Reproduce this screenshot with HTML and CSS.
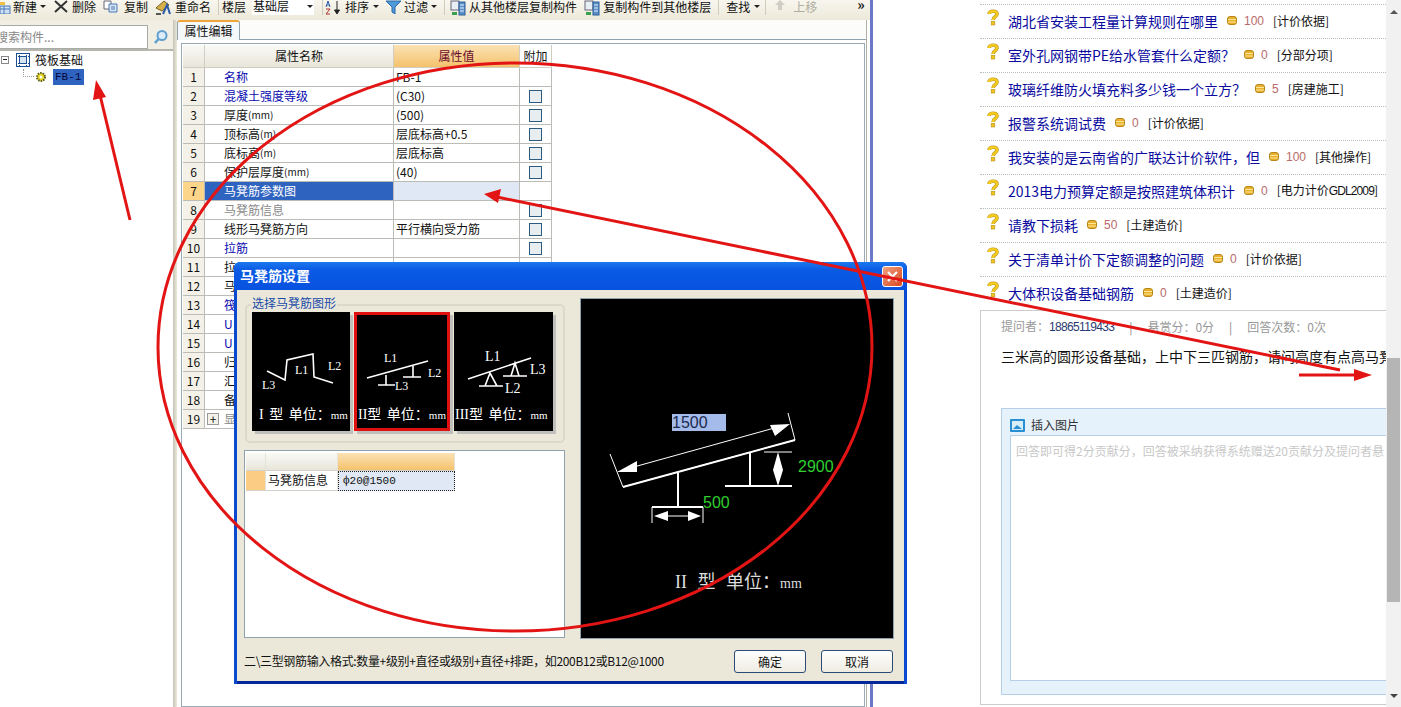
FILE: index.html
```html
<!DOCTYPE html>
<html lang="zh-CN">
<head>
<meta charset="utf-8">
<title>马凳筋设置</title>
<link rel="stylesheet" href="styles.css">
</head>
<body>
<svg class="defs" width="0" height="0" aria-hidden="true">
  <symbol id="q" viewBox="0 0 12 17">
    <path d="M2 5 C2 1.500 10 1 10 5 C10 8 6 7.500 6 11" fill="none" stroke="#b89018" stroke-width="3.600"/>
    <path d="M2 5 C2 1.500 10 1 10 5 C10 8 6 7.500 6 11" fill="none" stroke="#f4cc20" stroke-width="2.400"/>
    <rect x="4.200" y="12.400" width="3.600" height="3.600" fill="#f0c41c" stroke="#b89018" stroke-width="0.600"/>
  </symbol>
  <symbol id="coin" viewBox="0 0 10 9">
    <rect x="0.500" y="0.500" width="9" height="8" rx="2.500" fill="#e8b02c" stroke="#b8861a"/>
    <path d="M1 3.500H9M1 6H9" stroke="#fbe89a"/>
  </symbol>
  <symbol id="chk" viewBox="0 0 13 13">
    <rect x="0.500" y="0.500" width="12" height="12" fill="#e8edf0" stroke="#2c5a80"/>
  </symbol>
  <symbol id="cpy" viewBox="0 0 16 16">
    <rect x="1" y="1" width="8" height="9" fill="#e8eef6" stroke="#667"/>
    <rect x="9" y="2" width="6" height="13" fill="#5b8fc8" stroke="#2f5f98"/>
    <path d="M10 5H14M10 8H14M10 11H14" stroke="#e8f2ff"/>
    <path d="M2 12H7V15H2Z" fill="#3aa050"/>
  </symbol>
</svg>

<div class="screen">
  <section class="app">
    <div class="toolbar">
      <svg class="ti t-new" width="11" height="12" viewBox="0 0 11 12"><rect x="0" y="4" width="10" height="8" fill="#cfe0f5" stroke="#4a78b8"/><path d="M0 7H10M4 4V12" stroke="#4a78b8"/><rect x="0" y="0" width="5" height="3" fill="#f0c040"/></svg>
      <span class="tt w-new">新建</span><i class="caret c-new"></i>
      <svg class="ti t-del" width="14" height="13" viewBox="0 0 14 13"><path d="M1 1L13 12M13 1L1 12" stroke="#333" stroke-width="2"/></svg>
      <span class="tt w-del">删除</span>
      <svg class="ti t-cp" width="15" height="13" viewBox="0 0 15 13"><path d="M1 1H8V9H1Z" fill="#fff" stroke="#667"/><path d="M6 4H14V12H6Z" fill="#d5e3f3" stroke="#4a78b8"/><path d="M8 7H12M8 9H12" stroke="#4a78b8"/></svg>
      <span class="tt w-cp">复制</span>
      <svg class="ti t-ren" width="16" height="15" viewBox="0 0 16 15"><path d="M1 8L9 1L14 5L7 11Z" fill="#d8b048" stroke="#7a6020"/><path d="M8 14L12 5L15 14" fill="none" stroke="#2a5aa8" stroke-width="2"/><path d="M1 14H6" stroke="#555" stroke-width="2"/></svg>
      <span class="tt w-ren">重命名</span>
      <i class="sep s-a"></i>
      <span class="tt">楼层</span>
      <span class="floor">基础层<i class="caret"></i></span>
      <i class="sep s-b"></i>
      <svg class="ti t-sort" width="16" height="15" viewBox="0 0 16 15"><path d="M6 1V13M6 14L3.500 10H8.500Z" stroke="#222" fill="#222" transform="translate(6 0)"/><path d="M1 7L3 1L5 7M2 5H4" fill="none" stroke="#2a5aa8"/><path d="M1 9H5L1 14H5" fill="none" stroke="#b03030"/></svg>
      <span class="tt w-sort">排序</span><i class="caret c-sort"></i>
      <svg class="ti t-fil" width="15" height="14" viewBox="0 0 15 14"><path d="M0 1H15L9 7V14L6 12V7Z" fill="#4f9ad8" stroke="#2a6aa8"/></svg>
      <span class="tt w-fil">过滤</span><i class="caret c-fil"></i>
      <i class="sep s-c"></i>
      <svg class="ti t-c1" width="16" height="16"><use href="#cpy"/></svg>
      <span class="tt w-c1">从其他楼层复制构件</span>
      <svg class="ti t-c2" width="16" height="16"><use href="#cpy"/></svg>
      <span class="tt w-c2">复制构件到其他楼层</span>
      <i class="sep s-d"></i>
      <span class="tt">查找</span><i class="caret c-find"></i>
      <i class="sep s-e"></i>
      <svg class="ti t-up" width="10" height="11" viewBox="0 0 10 11"><path d="M5 0L10 5H7V10H3V5H0Z" fill="#d0cec2"/></svg>
      <span class="tt dim">上移</span>
      <span class="more">&raquo;</span>
    </div>

    <div class="workspace">
      <aside class="sidebar">
        <div class="search">
          <div class="search-input">搜索构件...</div>
          <div class="search-btn">
            <svg width="16" height="16" viewBox="0 0 16 16"><circle cx="9" cy="6.500" r="4.500" fill="#dcecf8" stroke="#5fa0d0" stroke-width="2"/><path d="M5.500 10L2 14" stroke="#5fa0d0" stroke-width="2.500"/></svg>
          </div>
        </div>
        <div class="tree">
          <div class="tree-root">
            <span class="minus"></span>
            <svg width="14" height="14" viewBox="0 0 14 14"><rect x="0.500" y="0.500" width="13" height="13" fill="#fff" stroke="#1c4f96"/><rect x="3.500" y="3.500" width="7" height="7" fill="#d8e6f4" stroke="#1c4f96"/><path d="M0 3.500H14M0 10.500H14M3.500 0V14M10.500 0V14" stroke="#1c4f96" stroke-dasharray="1 1"/></svg>
            <span>筏板基础</span>
          </div>
          <div class="tree-leaf">
            <i class="dots"></i>
            <svg width="12" height="12" viewBox="0 0 12 12"><circle cx="6" cy="6" r="4" fill="#e8d820" stroke="#5a5a20" stroke-dasharray="1.500 1" stroke-width="2"/><circle cx="6" cy="6" r="1.500" fill="#fff"/></svg>
            <span class="leaf-name">FB-1</span>
          </div>
        </div>
      </aside>
      <i class="splitter"></i>
      <main class="props">
        <div class="tabs"><span class="tab">属性编辑</span></div>
        <div class="grid-frame">
          <div class="grid">
            <div class="row head"><span class="num"></span><span class="name">属性名称</span><span class="val">属性值</span><span class="add">附加</span></div>
            <div class="row"><span class="num">1</span><span class="name blue">名称</span><span class="val">FB-1</span><span class="add"></span></div>
            <div class="row"><span class="num">2</span><span class="name blue">混凝土强度等级</span><span class="val">(C30)</span><span class="add"><svg width="13" height="13"><use href="#chk"/></svg></span></div>
            <div class="row"><span class="num">3</span><span class="name">厚度<small>(mm)</small></span><span class="val">(500)</span><span class="add"><svg width="13" height="13"><use href="#chk"/></svg></span></div>
            <div class="row"><span class="num">4</span><span class="name">顶标高<small>(m)</small></span><span class="val">层底标高+0.5</span><span class="add"><svg width="13" height="13"><use href="#chk"/></svg></span></div>
            <div class="row"><span class="num">5</span><span class="name">底标高<small>(m)</small></span><span class="val">层底标高</span><span class="add"><svg width="13" height="13"><use href="#chk"/></svg></span></div>
            <div class="row"><span class="num">6</span><span class="name">保护层厚度<small>(mm)</small></span><span class="val">(40)</span><span class="add"><svg width="13" height="13"><use href="#chk"/></svg></span></div>
            <div class="row sel"><span class="num">7</span><span class="name">马凳筋参数图</span><span class="val"></span><span class="add"></span></div>
            <div class="row"><span class="num">8</span><span class="name gray">马凳筋信息</span><span class="val"></span><span class="add"><svg width="13" height="13"><use href="#chk"/></svg></span></div>
            <div class="row"><span class="num">9</span><span class="name">线形马凳筋方向</span><span class="val">平行横向受力筋</span><span class="add"><svg width="13" height="13"><use href="#chk"/></svg></span></div>
            <div class="row"><span class="num">10</span><span class="name blue">拉筋</span><span class="val"></span><span class="add"><svg width="13" height="13"><use href="#chk"/></svg></span></div>
            <div class="row"><span class="num">11</span><span class="name">拉</span><span class="val"></span><span class="add"></span></div>
            <div class="row"><span class="num">12</span><span class="name">马</span><span class="val"></span><span class="add"></span></div>
            <div class="row"><span class="num">13</span><span class="name blue">筏</span><span class="val"></span><span class="add"></span></div>
            <div class="row"><span class="num">14</span><span class="name blue">U</span><span class="val"></span><span class="add"></span></div>
            <div class="row"><span class="num">15</span><span class="name blue">U</span><span class="val"></span><span class="add"></span></div>
            <div class="row"><span class="num">16</span><span class="name">归</span><span class="val"></span><span class="add"></span></div>
            <div class="row"><span class="num">17</span><span class="name">汇</span><span class="val"></span><span class="add"></span></div>
            <div class="row"><span class="num">18</span><span class="name">备</span><span class="val"></span><span class="add"></span></div>
            <div class="row"><span class="num">19</span><span class="name"><i class="plus">+</i><b class="plain">显</b></span><span class="val"></span><span class="add"></span></div>
          </div>
        </div>
      </main>
      <i class="edge"></i>
    </div>
  </section>

  <section class="web">
    <div class="web-main">
      <ul class="qlist">
        <li><svg class="qi"><use href="#q"/></svg><a>湖北省安装工程量计算规则在哪里</a><svg class="ci"><use href="#coin"/></svg><em>100</em><span>[计价依据]</span></li>
        <li><svg class="qi"><use href="#q"/></svg><a>室外孔网钢带PE给水管套什么定额？</a><svg class="ci"><use href="#coin"/></svg><em>0</em><span>[分部分项]</span></li>
        <li><svg class="qi"><use href="#q"/></svg><a>玻璃纤维防火填充料多少钱一个立方？</a><svg class="ci"><use href="#coin"/></svg><em>5</em><span>[房建施工]</span></li>
        <li><svg class="qi"><use href="#q"/></svg><a>报警系统调试费</a><svg class="ci"><use href="#coin"/></svg><em>0</em><span>[计价依据]</span></li>
        <li><svg class="qi"><use href="#q"/></svg><a>我安装的是云南省的广联达计价软件，但</a><svg class="ci"><use href="#coin"/></svg><em>100</em><span>[其他操作]</span></li>
        <li><svg class="qi"><use href="#q"/></svg><a>2013电力预算定额是按照建筑体积计</a><svg class="ci"><use href="#coin"/></svg><em>0</em><span>[电力计价<tt class="lat">GDL2009</tt>]</span></li>
        <li><svg class="qi"><use href="#q"/></svg><a>请教下损耗</a><svg class="ci"><use href="#coin"/></svg><em>50</em><span>[土建造价]</span></li>
        <li><svg class="qi"><use href="#q"/></svg><a>关于清单计价下定额调整的问题</a><svg class="ci"><use href="#coin"/></svg><em>0</em><span>[计价依据]</span></li>
        <li><svg class="qi"><use href="#q"/></svg><a>大体积设备基础钢筋</a><svg class="ci"><use href="#coin"/></svg><em>0</em><span>[土建造价]</span></li>
      </ul>
      <div class="detail">
        <div class="meta"><span>提问者：<b>18865119433</b></span><i>|</i><span>悬赏分：0分</span><i>|</i><span>回答次数：0次</span></div>
        <p class="question">三米高的圆形设备基础，上中下三匹钢筋，请问高度有点高马凳</p>
        <div class="editor">
          <div class="editor-head">
            <svg width="15" height="13" viewBox="0 0 15 13"><rect width="15" height="13" rx="1" fill="#2a8fd0"/><rect x="2" y="2" width="11" height="9" fill="#d8eefa"/><path d="M3 10L7 6L12 10Z" fill="#2a8fd0"/></svg>
            <span>插入图片</span>
          </div>
          <div class="editor-body">回答即可得2分贡献分，回答被采纳获得系统赠送20贡献分及提问者悬</div>
        </div>
      </div>
    </div>
    <div class="scrollbar">
      <span class="sb-up"></span>
      <span class="sb-thumb"></span>
      <span class="sb-down"></span>
    </div>
  </section>

  <div class="dialog">
    <header class="dlg-title">
      <span>马凳筋设置</span>
      <span class="dlg-close"><svg width="13" height="13" viewBox="0 0 13 13"><path d="M2 2L11 11M11 2L2 11" stroke="#fff" stroke-width="2.200"/></svg></span>
    </header>
    <div class="dlg-body">
      <div class="dlg-main">
        <div class="dlg-left">
          <fieldset class="pick">
            <legend>选择马凳筋图形</legend>
            <div class="thumbs">
              <svg class="thumb t1" width="98" height="119" viewBox="252 312 98 119">
                <rect x="252" y="312" width="98" height="119" fill="#000"/>
                <polyline points="267,371 285,380 287,360 313,354 314,377 333,383" fill="none" stroke="#fff" stroke-width="1.600"/>
                <text x="295" y="374">L1</text><text x="328" y="370">L2</text><text x="262" y="389">L3</text>
                <text class="cap" x="259" y="419">I 型 单位：<tspan class="mm">mm</tspan></text>
              </svg>
              <svg class="thumb t2" width="96" height="119" viewBox="354 312 96 119">
                <rect x="354" y="312" width="96" height="119" fill="#000"/>
                <rect x="355.500" y="313.500" width="93" height="116" fill="none" stroke="#e01010" stroke-width="3"/>
                <path d="M367 378L428 361M386 375V385M378 385H395M413 366V377M403 377H421" fill="none" stroke="#fff" stroke-width="1.600"/>
                <text x="384" y="362">L1</text><text x="428" y="377">L2</text><text x="395" y="390">L3</text>
                <text class="cap" x="358" y="419">II型 单位：<tspan class="mm">mm</tspan></text>
              </svg>
              <svg class="thumb t3" width="99" height="119" viewBox="454 312 99 119">
                <rect x="454" y="312" width="99" height="119" fill="#000"/>
                <path d="M468 379L531 358M490 373L485 386H497ZM479 386H503M515 363L511 376H519ZM503 376H527" fill="none" stroke="#fff" stroke-width="1.600"/>
                <text class="lg" x="485" y="361">L1</text><text class="lg" x="505" y="393">L2</text><text class="lg" x="530" y="374">L3</text>
                <text class="cap" x="455" y="419">III型 单位：<tspan class="mm">mm</tspan></text>
              </svg>
            </div>
          </fieldset>
          <div class="mini">
            <div class="mini-row mini-head"><span></span><span></span><span class="hot"></span></div>
            <div class="mini-row"><span class="hot"></span><span class="mini-name">马凳筋信息</span><span class="mini-val">ф20@1500</span></div>
          </div>
        </div>
        <svg class="preview" width="312" height="339" viewBox="581 299 312 339">
          <rect x="581" y="299" width="312" height="339" fill="#000"/>
          <rect x="672" y="414" width="54" height="17" fill="#a5bbe9"/>
          <text class="dim-val" x="672" y="428">1500</text>
          <path d="M610 454L623 487L795 440L788 413" fill="none" stroke="#fff"/>
          <path d="M623 487L795 440" fill="none" stroke="#fff" stroke-width="2"/>
          <path d="M630 468L778 427" stroke="#fff"/>
          <path d="M617 472L637 461L637 472Z M790 424L770 425L775 436Z" fill="#fff"/>
          <path d="M750 453V486M725 486H792M678 473V507M652 507H703" stroke="#fff" stroke-width="2"/>
          <path d="M764 452H792M652 507V523M703 507V523M660 516H695" stroke="#fff"/>
          <path d="M778 452L773 470H783ZM778 486L773 470H783Z" fill="#fff"/>
          <path d="M654 516L668 511V521ZM701 516L688 511V521Z" fill="#fff"/>
          <text class="green" x="798" y="472">2900</text>
          <text class="green" x="703" y="508">500</text>
          <text class="cap-big" x="675" y="588">II 型 单位：<tspan class="mm-big">mm</tspan></text>
        </svg>
      </div>
      <footer class="dlg-foot">
        <span class="hint">二\三型钢筋输入格式:数量+级别+直径或级别+直径+排距，如200B12或B12@1000</span>
        <button class="btn">确定</button>
        <button class="btn">取消</button>
      </footer>
    </div>
  </div>

  <svg class="ink" width="1401" height="707" viewBox="0 0 1401 707" aria-hidden="true">
    <ellipse cx="515" cy="347" rx="357" ry="284" fill="none" stroke="#e21414" stroke-width="3"/>
    <path d="M130 220L100 95" stroke="#e21414" stroke-width="3"/>
    <path d="M96 80L106 97L93 100Z" fill="#e21414"/>
    <path d="M1340 370L497 197" stroke="#e21414" stroke-width="3"/>
    <path d="M484 194L501 189L498 203Z" fill="#e21414"/>
    <path d="M1299 375H1358" stroke="#e21414" stroke-width="3"/>
    <path d="M1372 375L1354 369V381Z" fill="#e21414"/>
  </svg>
</div>
</body>
</html>
```

FILE: styles.css
```css
* { box-sizing: border-box; }
html, body { margin: 0; padding: 0; background: #fff; }
body { font: 12px/1 "Noto Sans CJK SC", sans-serif; color: #111; }
.defs { position: absolute; }
i, em { font-style: normal; }
small { font-size: 10px; }

.screen { position: relative; display: flex; width: 1401px; height: 707px; overflow: hidden; }

/* left application */
.app { display: flex; flex-direction: column; width: 873px; flex: none; border-right: 3px solid #6b78c8; }
.toolbar { display: flex; align-items: flex-start; height: 20px; background: linear-gradient(#f8f6ee, #ece9da); white-space: nowrap; overflow: hidden; }
.tt { line-height: 13px; flex: none; }
.ti { flex: none; }
.dim { color: #b0ae9f; margin-left: 8px; }
.caret { display: inline-block; width: 0; height: 0; border: 3px solid transparent; border-top: 3px solid #222; margin-top: 5px; flex: none; }
.sep { width: 1px; height: 15px; background: #cfccba; flex: none; }
.t-new { margin-left: 0; margin-top: 2px; }
.w-new { margin-left: 2px; }
.c-new { margin-left: 3px; }
.t-del { margin-left: 8px; }
.w-del { margin-left: 4px; }
.t-cp { margin-left: 7px; }
.w-cp { margin-left: 6px; }
.t-ren { margin-left: 7px; }
.w-ren { margin-left: 4px; }
.s-a { margin: 0 3px 0 7px; }
.floor { display: flex; width: 62px; height: 15px; margin-left: 6px; padding: 0 1px; line-height: 12px; background: #fff; justify-content: space-between; }
.s-b { margin: 0 2px 0 8px; }
.w-sort { margin-left: 4px; }
.c-sort { margin-left: 4px; }
.t-fil { margin-left: 7px; }
.w-fil { margin-left: 3px; }
.c-fil { margin-left: 3px; }
.s-c { margin: 0 5px 0 7px; }
.w-c1 { margin-left: 3px; }
.t-c2 { margin-left: 7px; }
.w-c2 { margin-left: 3px; }
.s-d { margin: 0 7px; }
.c-find { margin-left: 4px; }
.s-e { margin: 0 9px 0 5px; }
.more { margin-left: 40px; font-size: 14px; line-height: 9px; font-weight: 700; }

.workspace { display: flex; flex: 1; min-height: 0; }
.sidebar { width: 173px; flex: none; background: #fff; display: flex; flex-direction: column; }
.search { display: flex; height: 31px; padding-top: 5px; background: #f1efe4; border-bottom: 2px solid #b6b6ac; }
.search-input { width: 148px; height: 24px; padding-top: 2px; text-indent: -4px; overflow: hidden; background: #fff; border: 1px solid #a5aca8; border-left: 0; line-height: 18px; color: #888; }
.search-btn { flex: 1; display: flex; align-items: center; justify-content: center; }
.tree-root { display: flex; align-items: center; height: 18px; gap: 5px; padding-left: 1px; }
.minus { position: relative; width: 8px; height: 8px; border: 1px solid #888; margin-right: 2px; }
.minus::after { content: ""; position: absolute; left: 1px; right: 1px; top: 2px; height: 1px; background: #222; }
.tree-leaf { display: flex; align-items: center; height: 16px; padding-left: 23px; }
.dots { width: 11px; height: 8px; margin-top: -8px; border-left: 1px dotted #999; border-bottom: 1px dotted #999; }
.tree-leaf svg { margin-left: 1px; }
.leaf-name { margin-left: 6px; width: 31px; height: 16px; padding-left: 2px; background: #2f63c0; color: #06063a; font: 11px/16px "Liberation Mono", monospace; }

.splitter { width: 4px; flex: none; background: linear-gradient(90deg, #c5c3b6, #ece9da); }
.props { flex: 1; min-width: 0; display: flex; flex-direction: column; background: #fff; }
.tabs { height: 20px; flex: none; border-bottom: 1px solid #8fa2b0; background: #fcfcfa; }
.tab { display: inline-block; height: 20px; width: 63px; padding-top: 2px; text-align: center; line-height: 14px; background: #f4f8f8; border: 1px solid #8fa2b0; border-top: 2px solid #eea63a; border-bottom: 0; border-radius: 3px 3px 0 0; }
.grid-frame { flex: 1; margin: 3px 1px 0 4px; border: 1px solid #98aab5; padding: 1px; }

.row { display: grid; grid-template-columns: 22px 189px 126px 32px; height: 19px; width: 369px; }
.row > span { display: flex; align-items: center; border-bottom: 1px solid #bcbcb6; border-right: 1px solid #bcbcb6; white-space: nowrap; overflow: hidden; }
.num { justify-content: center; background: #f4f2e8; }
.name { padding-left: 19px; }
.val { padding-left: 2px; }
.add { justify-content: center; }
.head { height: 23px; }
.head > span { justify-content: center; padding: 0; border-color: #d0cec0; background: linear-gradient(#fafaf6, #e8e6da); }
.head .val { background: linear-gradient(#fbe2b4, #f4c26c); color: #6a0a2a; }
.head .add { background: #fff; }
.blue { color: #0a0ab0; }
.gray { color: #8a8a8a; }
.sel .num { background: #fcd48a; }
.sel .name { background: #2f63c0; color: #fff; }
.sel .val { background: #dfe8f4; }
.plus { width: 12px; height: 12px; margin-left: -17px; margin-right: 5px; border: 1px solid #999; background: #f4f2e8; text-align: center; line-height: 10px; flex: none; }
.plain { font-weight: 400; color: #888; }
.edge { width: 4px; flex: none; border-left: 1px solid #b0b0a8; }

/* right page */
.web { flex: 1; min-width: 0; display: flex; }
.web-main { flex: 1; min-width: 0; padding: 4px 0 0 107px; overflow: hidden; }
.qlist { list-style: none; margin: 0; padding: 0; border-top: 1px dotted #bbb; }
.qlist li { display: flex; align-items: center; height: 34px; padding: 0 0 2px 7px; border-bottom: 1px dotted #bbb; white-space: nowrap; }
.qlist li:last-child { height: 33px; border-bottom: 0; }
.qi { width: 12px; height: 17px; margin: -7px 9px 0 0; flex: none; }
.qlist a { font-size: 14px; color: #0a0aa0; line-height: 16px; }
.ci { width: 10px; height: 9px; margin-left: 9px; flex: none; }
.qlist em { margin-left: 7px; font: 12px "Liberation Sans", sans-serif; color: #b96a6a; }
.qlist span { margin-left: 9px; font-size: 12px; }
.lat { font: 12px "Liberation Sans", sans-serif; letter-spacing: -0.9px; }
.detail { height: 395px; padding: 8px 0 0 20px; border: 1px solid #ccc; border-right: 0; }
.meta { display: flex; height: 16px; align-items: center; color: #999; }
.meta b { font: 400 12px "Liberation Sans", sans-serif; letter-spacing: -0.67px; color: #2a3a70; }
.meta i { margin: 0 15px; color: #888; }
.question { margin: 11px 0 0; font-size: 14px; line-height: 20px; white-space: nowrap; color: #111; }
.editor { height: 287px; margin-top: 42px; padding: 0 0 13px 8px; background: #e5f1fb; border: 1px solid #b5cfe8; border-right: 0; display: flex; flex-direction: column; }
.editor-head { display: flex; align-items: center; gap: 6px; height: 26px; padding-top: 6px; flex: none; color: #333; }
.editor-body { flex: 1; padding: 8px 5px; overflow: hidden; white-space: nowrap; background: #fff; border: 1px solid #b5cfe8; border-right: 0; color: #c8c8c8; line-height: 14px; }
.scrollbar { width: 15px; flex: none; display: flex; flex-direction: column; align-items: center; background: #f1f1f1; }
.sb-up { width: 0; height: 0; margin-top: 10px; border: 4px solid transparent; border-bottom: 4px solid #555; border-top: 0; }
.sb-thumb { width: 13px; height: 244px; margin-top: 344px; background: #b5b5b5; }
.sb-down { width: 0; height: 0; margin-top: 92px; border: 4px solid transparent; border-top: 4px solid #444; border-bottom: 0; }

/* floating dialog */
.dialog { position: absolute; left: 234px; top: 262px; width: 673px; height: 422px; display: flex; flex-direction: column; background: #0a4ad0; border-radius: 6px 6px 0 0; }
.dlg-title { display: flex; align-items: center; justify-content: space-between; height: 28px; flex: none; padding: 0 4px 2px 6px; color: #fff; font-weight: 700; font-size: 14px; background: linear-gradient(#1a78ee, #0a5ae4 30%, #0852e0); border-radius: 6px 6px 0 0; }
.dlg-close { display: flex; align-items: center; justify-content: center; width: 21px; height: 21px; margin-top: 2px; background: linear-gradient(135deg, #f0a080, #d84820); border: 1px solid #fff; border-radius: 3px; }
.dlg-body { flex: 1; display: flex; flex-direction: column; min-height: 0; margin: 0 3px 3px 3px; padding: 9px 11px 0 7px; background: #ebe8da; box-shadow: 0 3px 0 #04289a; }
.dlg-main { display: flex; height: 339px; flex: none; gap: 16px; }
.dlg-left { width: 321px; flex: none; display: flex; flex-direction: column; }
.pick { position: relative; width: 320px; height: 139px; margin: 5px 0 0 1px; padding: 0; border: 2px solid #dcd9c8; border-radius: 5px; }
.pick legend { position: absolute; left: 4px; top: -10px; padding: 0 1px; background: #ebe8da; color: #1a4aa8; line-height: 14px; }
.thumbs { display: flex; gap: 4px; padding: 6px 0 0 5px; }
.thumb { flex: none; box-shadow: 3px 3px 0 #bfbfbb; }
.thumb text { fill: #fff; font: 12px "Liberation Serif", serif; }
.thumb text.lg { font-size: 14px; }
.thumb text.cap { font: 14px "Liberation Serif", "Noto Sans CJK SC", serif; word-spacing: 2px; }
.thumb tspan.mm { font-size: 11px; }
.mini { flex: 1; margin-top: 7px; padding: 2px 1px; background: #fff; border: 1px solid #8fa2b0; }
.mini-row { display: grid; grid-template-columns: 20px 72px 117px; height: 19px; }
.mini-row > span { border-bottom: 1px solid #d4d2c8; border-right: 1px solid #e4e2d8; line-height: 18px; }
.mini-head { height: 18px; }
.mini-head > span { background: linear-gradient(#fafaf6, #e8e6da); }
.mini-row .hot { background: #fbcd84; }
.mini-head .hot { background: linear-gradient(#fbe2b4, #f4c26c); }
.mini-name { padding-left: 2px; white-space: nowrap; }
.mini-val { padding-left: 4px; background: #dfe8f4; border: 1px dotted #222 !important; font: 11px/17px "Liberation Mono", monospace; }
.preview { flex: none; outline: 1px solid #8fa2b0; }
.dim-val { font: 16px "Liberation Sans", sans-serif; fill: #1c2a50; }
.green { font: 16px "Liberation Sans", sans-serif; fill: #2fd02f; }
.cap-big { font: 18px "Liberation Serif", "Noto Sans CJK SC", serif; fill: #ddd; word-spacing: 6px; }
.mm-big { font-size: 14px; }
.dlg-foot { display: flex; align-items: center; flex: 1; padding-top: 3px; }
.hint { flex: 1; letter-spacing: -0.34px; white-space: nowrap; }
.btn { width: 72px; height: 23px; margin-left: 15px; padding: 0; font: 12px "Noto Sans CJK SC", sans-serif; color: #111; background: linear-gradient(#fefefe, #eeece2); border: 1px solid #2a4a7a; border-radius: 3px; }

/* annotations drawn over the screenshot */
.ink { position: absolute; left: 0; top: 0; pointer-events: none; }
```
